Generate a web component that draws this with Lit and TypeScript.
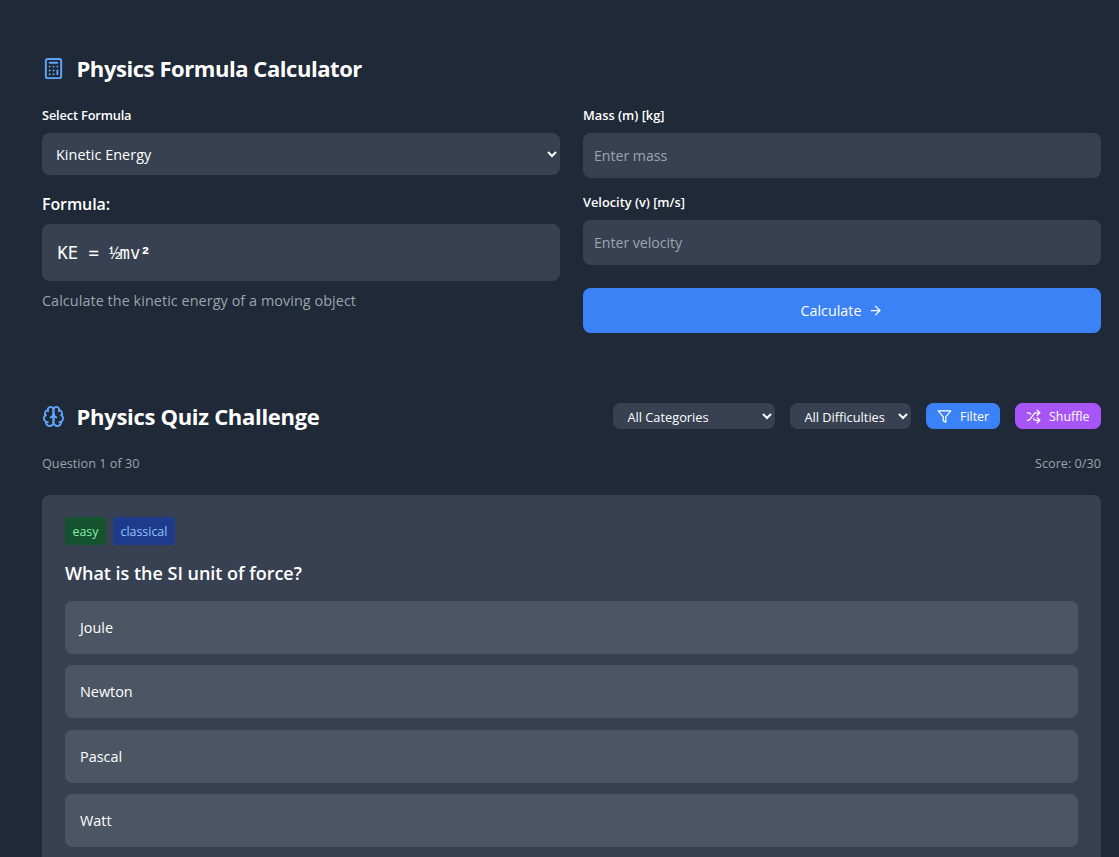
import { LitElement, html, svg, css } from "lit";
import { customElement, property, state } from "lit/decorators.js";

const ICONS: Record<string, unknown> = {
  calculator: svg`<rect width="16" height="20" x="4" y="2" rx="2"/><path d="M8 6h8M16 14v4M16 10h.01M12 10h.01M8 10h.01M12 14h.01M8 14h.01M12 18h.01M8 18h.01"/>`,
  brain: svg`<path d="M12 5a3 3 0 1 0-5.997.125 4 4 0 0 0-2.526 5.77 4 4 0 0 0 .556 6.588A4 4 0 1 0 12 18Z"/><path d="M12 5a3 3 0 1 1 5.997.125 4 4 0 0 1 2.526 5.77 4 4 0 0 1-.556 6.588A4 4 0 1 1 12 18Z"/><path d="M15 13a4.5 4.5 0 0 1-3-4 4.5 4.5 0 0 1-3 4"/><path d="M17.599 6.5a3 3 0 0 0 .399-1.375"/><path d="M6.003 5.125A3 3 0 0 0 6.401 6.5"/><path d="M3.477 10.896a4 4 0 0 1 .585-.396"/><path d="M19.938 10.5a4 4 0 0 1 .585.396"/><path d="M6 18a4 4 0 0 1-1.967-.516"/><path d="M19.967 17.484A4 4 0 0 1 18 18"/>`,
  arrow: svg`<path d="M5 12h14"/><path d="m12 5 7 7-7 7"/>`,
  filter: svg`<polygon points="22 3 2 3 10 12.46 10 19 14 21 14 12.46 22 3"/>`,
  shuffle: svg`<path d="M2 18h1.4c1.3 0 2.5-.6 3.3-1.7l6.1-8.6c.7-1.1 2-1.7 3.3-1.7H22"/><path d="m18 2 4 4-4 4"/><path d="M2 6h1.9c1.5 0 2.9.9 3.6 2.2"/><path d="M22 18h-5.9c-1.3 0-2.6-.7-3.3-1.8l-.5-.8"/><path d="m18 14 4 4-4 4"/>`,
};

@customElement("ui-icon")
export class UiIcon extends LitElement {
  static styles = css`
    :host { display: block; flex: none; }
    svg { display: block; width: 100%; height: 100%; fill: none; stroke: currentColor; stroke-width: 2; stroke-linecap: round; stroke-linejoin: round; }
  `;
  @property() name = "";
  render() {
    return html`<svg viewBox="0 0 24 24" aria-hidden="true">${ICONS[this.name]}</svg>`;
  }
}

const base = css`
  * { box-sizing: border-box; }
  :host { display: block; font-family: "Open Sans", "Noto Sans", sans-serif; color: #fff; }
  h2, h3, p { margin: 0; }
  select, input, button { font-family: inherit; color: #fff; border: 0; margin: 0; outline: none; }
  .title { display: flex; align-items: center; gap: 11.5px; height: 30px; padding-bottom: 2px; font-size: 22px; line-height: 28px; font-weight: 700; letter-spacing: -0.44px; white-space: nowrap; }
  .title ui-icon { width: 23px; height: 23px; color: #60a5fa; }
`;

@customElement("formula-calculator")
export class FormulaCalculator extends LitElement {
  static styles = [base, css`
    .columns { display: grid; grid-template-columns: 518px 518px; column-gap: 23px; margin-top: 21px; }
    label { display: block; height: 20px; margin-bottom: 8px; font-size: 12.8px; line-height: 20px; font-weight: 600; letter-spacing: -0.16px; }
    .right label { letter-spacing: 0; }
    .select { display: block; width: 100%; height: 42px; padding: 1px 0 0 10px; border-radius: 7.5px; background: #374151; font-size: 14.4px; letter-spacing: 0.05px; }
    h3 { margin: 17px 0 8px; font-size: 16px; line-height: 24px; font-weight: 600; letter-spacing: -0.1px; }
    .formula { height: 57px; padding: 0 15.5px; border-radius: 7.5px; background: #374151; font: 17.2px/58px "DejaVu Sans Mono", monospace; }
    .formula span { font-family: "Liberation Mono", monospace; font-weight: 700; line-height: 1; }
    .formula .half { font-size: 19px; font-weight: 400; letter-spacing: -1.1px; }
    .note { margin-top: 8px; color: #9ca3af; font-size: 14.4px; line-height: 23px; letter-spacing: 0.06px; }
    input { display: block; width: 100%; height: 45px; margin-bottom: 14px; padding: 0 11px; border-radius: 7.5px; background: #374151; font-size: 14.2px; letter-spacing: -0.05px; }
    input::placeholder { color: #9ca3af; opacity: 1; }
    .calculate { display: flex; align-items: center; justify-content: center; gap: 7px; width: 100%; height: 45px; margin-top: 23px; padding: 0; border-radius: 7.5px; background: #3b82f6; font-size: 14.3px; }
    .calculate ui-icon { width: 15px; height: 15px; }
  `];
  render() {
    return html`
      <h2 class="title"><ui-icon name="calculator"></ui-icon>Physics Formula Calculator</h2>
      <div class="columns">
        <div>
          <label for="formula">Select Formula</label>
          <select id="formula" class="select"><option>Kinetic Energy</option></select>
          <h3>Formula:</h3>
          <div class="formula">KE = <span class="half">½</span>mv<span>²</span></div>
          <p class="note">Calculate the kinetic energy of a moving object</p>
        </div>
        <div class="right">
          <label for="mass">Mass (m) [kg]</label>
          <input id="mass" placeholder="Enter mass">
          <label for="velocity">Velocity (v) [m/s]</label>
          <input id="velocity" placeholder="Enter velocity">
          <button class="calculate">Calculate<ui-icon name="arrow"></ui-icon></button>
        </div>
      </div>`;
  }
}

@customElement("physics-quiz")
export class PhysicsQuiz extends LitElement {
  static styles = [base, css`
    .title { letter-spacing: -0.3px; }
    .head { display: flex; align-items: center; justify-content: space-between; height: 30px; }
    .controls { display: flex; gap: 15px; margin-top: -2px; }
    .controls select { height: 26px; padding: 1px 0 0 10.4px; border-radius: 7.5px; background: #374151; font-size: 12.8px; }
    .category { width: 162px; }
    .difficulty { width: 121px; }
    .action { display: flex; align-items: center; gap: 8px; height: 26px; padding: 0 11px; border-radius: 7.5px; font-size: 12.4px; }
    .action ui-icon { width: 15px; height: 15px; }
    .filter { width: 74px; background: #3b82f6; }
    .shuffle { width: 86px; background: #a855f7; }
    .progress { display: flex; justify-content: space-between; margin-top: 21px; color: #9ca3af; font-size: 12.7px; line-height: 20px; }
    .card { margin-top: 22px; padding: 22px 23px 23px; border-radius: 7.5px; background: #374151; }
    .tags { display: flex; gap: 7px; }
    .tag { height: 28px; padding: 0 7.5px; border-radius: 4px; font-size: 12.4px; line-height: 29px; }
    .easy { width: 41px; background: #14532d; color: #86efac; }
    .classical { width: 62px; background: #1e3a8a; color: #93c5fd; }
    h3 { margin: 15px 0 15px; font-size: 18px; line-height: 26px; font-weight: 600; letter-spacing: -0.02px; }
    .answers { display: grid; gap: 11.4px; }
    .answer { height: 53px; padding: 0 15px; border-radius: 7.5px; background: #4b5563; text-align: left; font-size: 14.4px; }
  `];
  @state() private answers = ["Joule", "Newton", "Pascal", "Watt"];
  render() {
    return html`
      <div class="head">
        <h2 class="title"><ui-icon name="brain"></ui-icon>Physics Quiz Challenge</h2>
        <div class="controls">
          <select class="category"><option>All Categories</option></select>
          <select class="difficulty"><option>All Difficulties</option></select>
          <button class="action filter"><ui-icon name="filter"></ui-icon>Filter</button>
          <button class="action shuffle"><ui-icon name="shuffle"></ui-icon>Shuffle</button>
        </div>
      </div>
      <div class="progress"><span>Question 1 of 30</span><span>Score: 0/30</span></div>
      <div class="card">
        <div class="tags"><span class="tag easy">easy</span><span class="tag classical">classical</span></div>
        <h3>What is the SI unit of force?</h3>
        <div class="answers">${this.answers.map((a) => html`<button class="answer">${a}</button>`)}</div>
      </div>`;
  }
}

@customElement("app-root")
export class AppRoot extends LitElement {
  static styles = css`
    :host { display: block; height: 857px; overflow: hidden; background: #1f2937; }
    main { display: flex; flex-direction: column; gap: 69px; padding: 54px 18px 0 42px; }
  `;
  render() {
    return html`<main><formula-calculator></formula-calculator><physics-quiz></physics-quiz></main>`;
  }
}
